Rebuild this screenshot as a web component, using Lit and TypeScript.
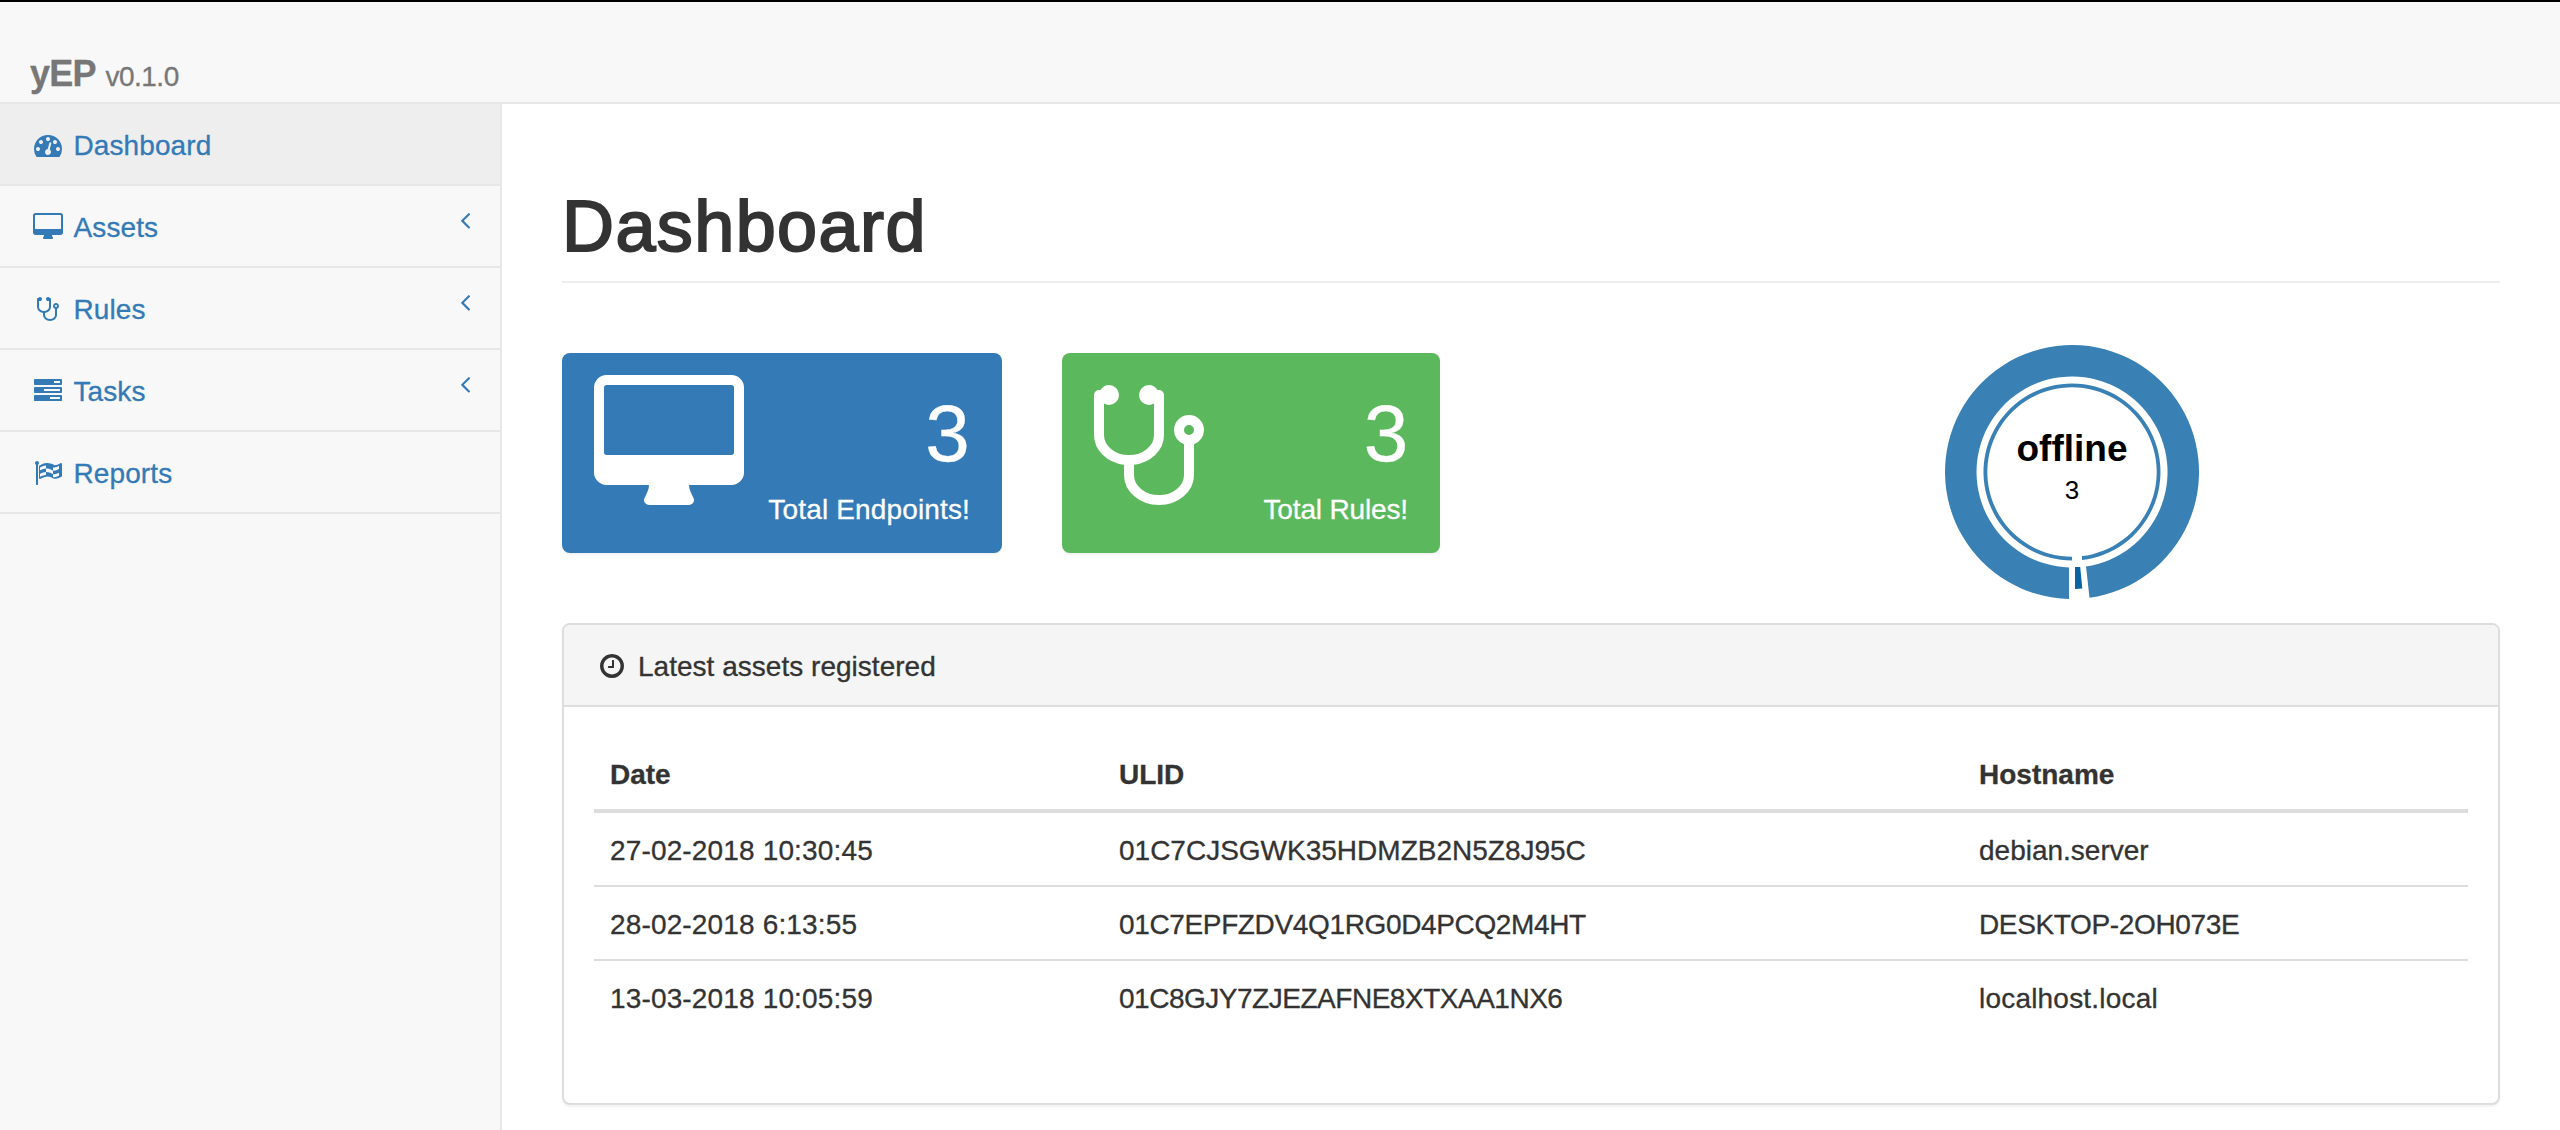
import { LitElement, html, css, svg } from "lit";
import { customElement, property } from "lit/decorators.js";

interface Glyph {
  d: string;
  x: number;
  y: number;
  w: number;
  h: number;
  /** Blank space above the glyph, in glyph units. */
  top: number;
}

const GLYPHS: Record<string, Glyph> = {
  dashboard: {
    d: "M384 1152q0-53-37.5-90.5t-90.5-37.5-90.5 37.5-37.5 90.5 37.5 90.5 90.5 37.5 90.5-37.5 37.5-90.5zm192-448q0-53-37.5-90.5t-90.5-37.5-90.5 37.5-37.5 90.5 37.5 90.5 90.5 37.5 90.5-37.5 37.5-90.5zm428 481l101-382q6-26-7.5-48.5t-38.5-29.5-48 6.5-30 39.5l-101 382q-60 5-107 43.5t-63 98.5q-20 77 20 146t117 89 146-20 89-117q16-60-6-117t-72-91zm660-33q0-53-37.5-90.5t-90.5-37.5-90.5 37.5-37.5 90.5 37.5 90.5 90.5 37.5 90.5-37.5 37.5-90.5zm-640-640q0-53-37.5-90.5t-90.5-37.5-90.5 37.5-37.5 90.5 37.5 90.5 90.5 37.5 90.5-37.5 37.5-90.5zm448 192q0-53-37.5-90.5t-90.5-37.5-90.5 37.5-37.5 90.5 37.5 90.5 90.5 37.5 90.5-37.5 37.5-90.5zm320 448q0 261-141 483-19 29-54 29h-1402q-35 0-54-29-141-221-141-483 0-182 71-348t191-286 286-191 348-71 348 71 286 191 191 286 71 348z",
    x: 0, y: 256, w: 1792, h: 1408, top: 256,
  },
  desktop: {
    d: "M1792 992v-832q0-13-9.5-22.5t-22.5-9.5h-1600q-13 0-22.5 9.5t-9.5 22.5v832q0 13 9.5 22.5t22.5 9.5h1600q13 0 22.5-9.5t9.5-22.5zm128-832v1088q0 66-47 113t-113 47h-544q0 37 16 77.5t32 71 16 43.5q0 26-19 45t-45 19h-512q-26 0-45-19t-19-45q0-14 16-44t32-70 16-78h-544q-66 0-113-47t-47-113v-1088q0-66 47-113t113-47h1600q66 0 113 47t47 113z",
    x: 0, y: 0, w: 1920, h: 1664, top: 0,
  },
  stethoscope: {
    d: "M1344 640q0-26-19-45t-45-19-45 19-19 45 19 45 45 19 45-19 19-45zm128 0q0 62-35.5 111t-92.5 70v395q0 159-131.5 271.5t-316.5 112.5-316.5-112.5-131.5-271.5v-132q-164-20-274-128t-110-252v-512q0-26 19-45t45-19q6 0 16 2 17-30 47-48t65-18q53 0 90.5 37.5t37.5 90.5-37.5 90.5-90.5 37.5q-33 0-64-18v402q0 106 94 181t226 75 226-75 94-181v-402q-31 18-64 18-53 0-90.5-37.5t-37.5-90.5 37.5-90.5 90.5-37.5q35 0 65 18t47 48q10-2 16-2 26 0 45 19t19 45v512q0 144-110 252t-274 128v132q0 106 94 181t226 75 226-75 94-181v-395q-57-21-92.5-70t-35.5-111q0-80 56-136t136-56 136 56 56 136z",
    x: 64, y: 64, w: 1408, h: 1536, top: 128,
  },
  tasks: {
    d: "M1024 1408h640v-128h-640v128zm-384-512h1024v-128h-1024v128zm640-512h384v-128h-384v128zm512 832v256q0 26-19 45t-45 19h-1664q-26 0-45-19t-19-45v-256q0-26 19-45t45-19h1664q26 0 45 19t19 45zm0-512v256q0 26-19 45t-45 19h-1664q-26 0-45-19t-19-45v-256q0-26 19-45t45-19h1664q26 0 45 19t19 45zm0-512v256q0 26-19 45t-45 19h-1664q-26 0-45-19t-19-45v-256q0-26 19-45t45-19h1664q26 0 45 19t19 45z",
    x: 0, y: 128, w: 1792, h: 1408, top: 128,
  },
  flag: {
    d: "M832 896v-192q-181 16-384 117v185q205-96 384-110zm0-416v-197q-172 8-384 126v189q215-111 384-118zm832 463v-184q-235 116-384 71v-224q-20-6-39-15-5-3-33-17t-34.5-17-31.5-15-34.5-15.5-32.5-13-36-12.5-35-8.5-39.5-7.5-39.5-4-44-2q-23 0-49 3v222h19q102 0 192.5 29t197.5 82q19 9 39 15v188q42 17 91 17 120 0 293-92zm0-427v-189q-169 91-306 91-45 0-78-8v196q148 42 384-90zm-1280-388q0 35-17.5 64t-46.5 46v1266q0 14-9 23t-23 9h-64q-14 0-23-9t-9-23v-1266q-29-17-46.5-46t-17.5-64q0-53 37.5-90.5t90.5-37.5 90.5 37.5 37.5 90.5zm1472 64v763q0 39-35 57-10 5-17 9-218 116-369 116-88 0-158-35l-28-14q-64-33-99-48t-91-29-114-14q-102 0-235.5 44t-228.5 102q-15 9-33 9-16 0-32-8-32-19-32-56v-742q0-35 31-55 35-21 78.5-42.5t114-52 152.5-49.5 155-19q112 0 209 31t209 86q38 19 89 19 122 0 310-112 22-12 31-17 31-16 62 2 31 20 31 55z",
    x: 64, y: 0, w: 1792, h: 1536, top: 128,
  },
  clock: {
    d: "M1024 544v448q0 14-9 23t-23 9h-320q-14 0-23-9t-9-23v-64q0-14 9-23t23-9h224v-352q0-14 9-23t23-9h64q14 0 23 9t9 23zm416 352q0-148-73-273t-198-198-273-73-273 73-198 198-73 273 73 273 198 198 273 73 273-73 198-198 73-273zm224 0q0 209-103 385.5t-279.5 279.5-385.5 103-385.5-103-279.5-279.5-103-385.5 103-385.5 279.5-279.5 385.5-103 385.5 103 279.5 279.5 103 385.5z",
    x: 128, y: 128, w: 1536, h: 1536, top: 128,
  },
  angle: {
    d: "M1203 544q0 13-10 23l-393 393 393 393q10 10 10 23t-10 23l-50 50q-10 10-23 10t-23-10l-466-466q-10-10-10-23t10-23l466-466q10-10 23-10t23 10l50 50q10 10 10 23z",
    x: 621, y: 461, w: 582, h: 998, top: 0,
  },
};

/** Draws a glyph at the given em size; 1792 glyph units make one em. */
function icon(name: string, em = 28) {
  const g = GLYPHS[name];
  const k = em / 1792;
  return html`<svg
    width=${g.w * k}
    height=${(g.h + g.top) * k}
    viewBox="${g.x} ${g.y - g.top} ${g.w} ${g.h + g.top}"
    fill="currentColor"
    aria-hidden="true"
  >${svg`<path d=${g.d}></path>`}</svg>`;
}

@customElement("yep-nav")
class YepNav extends LitElement {
  static styles = css`
    :host { display: block; }
    .row {
      box-sizing: border-box;
      height: 82px;
      padding: 0 30px;
      display: flex;
      align-items: flex-start;
      border-bottom: 2px solid #e7e7e7;
      color: #337ab7;
    }
    .row.active { background: #eee; }
    .icon { width: 36px; padding-top: 27px; display: flex; justify-content: center; }
    .label { flex: 1; padding: 22px 0 0 7.5px; line-height: 40px; letter-spacing: 0.1px; }
    .arrow { padding-top: 27px; display: flex; }
  `;

  private items = [
    { label: "Dashboard", glyph: "dashboard", active: true, sub: false },
    { label: "Assets", glyph: "desktop", active: false, sub: true },
    { label: "Rules", glyph: "stethoscope", active: false, sub: true },
    { label: "Tasks", glyph: "tasks", active: false, sub: true },
    { label: "Reports", glyph: "flag", active: false, sub: false },
  ];

  render() {
    return this.items.map(
      (i) => html`<div class="row ${i.active ? "active" : ""}">
        <span class="icon">${icon(i.glyph)}</span>
        <span class="label">${i.label}</span>
        ${i.sub ? html`<span class="arrow">${icon("angle")}</span>` : ""}
      </div>`
    );
  }
}

@customElement("yep-stat")
class YepStat extends LitElement {
  @property() glyph = "";
  @property() value = "";
  @property() label = "";

  static styles = css`
    :host {
      box-sizing: border-box;
      height: 200px;
      padding: 22px 32px 0;
      display: flex;
      justify-content: space-between;
      align-items: flex-start;
      border-radius: 8px;
      color: #fff;
      box-shadow: 0 2px 2px rgba(0, 0, 0, 0.05);
    }
    svg { display: block; }
    .figures { text-align: right; padding-top: 15px; }
    .value { font-size: 80px; line-height: 88px; }
    .label { line-height: 40px; padding-top: 12px; white-space: nowrap; }
  `;

  render() {
    return html`
      ${icon(this.glyph, 140)}
      <div class="figures">
        <div class="value">${this.value}</div>
        <div class="label">${this.label}</div>
      </div>
    `;
  }
}

@customElement("yep-donut")
class YepDonut extends LitElement {
  static styles = css`
    :host { display: block; }
    svg { display: block; }
    .ring { fill: #3980b5; }
    .sliver { fill: #0b62a4; }
    .name { font-size: 37px; font-weight: 700; text-anchor: middle; }
    .count { font-size: 26px; text-anchor: middle; }
  `;

  render() {
    return html`<svg width="256" height="256" viewBox="-128 -128 256 256">
      <path class="ring" d="M-3 126.965A127 127 0 1 1 17.5 125.79L14 94.47A95.5 95.5 0 1 0 -3 95.45Z"></path>
      <path class="ring" d="M0 88.5A88.5 88.5 0 1 1 10 87.93V84.11A84.7 84.7 0 1 0 0 84.7Z"></path>
      <path class="sliver" d="M3 95H8.2L10.3 116.5L3 117Z"></path>
      <text class="name" x="0" y="-11.5">offline</text>
      <text class="count" x="0" y="26.5">3</text>
    </svg>`;
  }
}

interface Cell {
  text: string;
  /** Letter spacing in pixels. */
  track: number;
}

@customElement("yep-assets")
class YepAssets extends LitElement {
  static styles = css`
    :host {
      box-sizing: border-box;
      display: block;
      height: 482px;
      border: 2px solid #ddd;
      border-radius: 8px;
      overflow: hidden;
      background: #fff;
      box-shadow: 0 2px 2px rgba(0, 0, 0, 0.05);
    }
    .heading {
      height: 80px;
      padding: 0 30px;
      display: flex;
      align-items: flex-start;
      background: #f5f5f5;
      border-bottom: 2px solid #ddd;
    }
    .icon { width: 36px; padding-top: 27px; display: flex; justify-content: center; }
    .title { padding: 22px 0 0 8px; line-height: 40px; letter-spacing: 0.02px; }
    .table { padding: 30px; }
    .row { display: grid; grid-template-columns: 509px 860px 1fr; border-top: 2px solid #ddd; }
    .row.head { border-top: 0; border-bottom: 4px solid #ddd; font-weight: 700; }
    .row.first { border-top: 0; }
    .cell { padding: 18px 16px 14px; line-height: 40px; }
  `;

  private rows: Cell[][] = [
    [
      { text: "27-02-2018 10:30:45", track: 0.15 },
      { text: "01C7CJSGWK35HDMZB2N5Z8J95C", track: 0 },
      { text: "debian.server", track: 0 },
    ],
    [
      { text: "28-02-2018 6:13:55", track: 0.15 },
      { text: "01C7EPFZDV4Q1RG0D4PCQ2M4HT", track: -0.36 },
      { text: "DESKTOP-2OH073E", track: -0.35 },
    ],
    [
      { text: "13-03-2018 10:05:59", track: 0.15 },
      { text: "01C8GJY7ZJEZAFNE8XTXAA1NX6", track: -0.48 },
      { text: "localhost.local", track: 0.2 },
    ],
  ];

  render() {
    return html`
      <div class="heading">
        <span class="icon">${icon("clock")}</span>
        <span class="title">Latest assets registered</span>
      </div>
      <div class="table">
        <div class="row head">
          ${["Date", "ULID", "Hostname"].map((c) => html`<div class="cell">${c}</div>`)}
        </div>
        ${this.rows.map(
          (r, n) => html`<div class="row ${n === 0 ? "first" : ""}">
            ${r.map((c) => html`<div class="cell" style="letter-spacing:${c.track}px">${c.text}</div>`)}
          </div>`
        )}
      </div>
    `;
  }
}

@customElement("app-root")
class AppRoot extends LitElement {
  static styles = css`
    :host {
      box-sizing: border-box;
      display: flex;
      flex-direction: column;
      height: 1130px;
      overflow: hidden;
      border-top: 2px solid #000;
      background: #f8f8f8;
      color: #333;
      font-family: "Liberation Sans", Arial, sans-serif;
      font-size: 28px;
      -webkit-text-stroke: 0.3px currentColor;
    }
    .bar {
      box-sizing: border-box;
      height: 102px;
      padding: 52px 30px 0;
      border-bottom: 2px solid #e7e7e7;
      color: #777;
      line-height: 40px;
      white-space: nowrap;
    }
    .brand { font-size: 36px; font-weight: 700; letter-spacing: -0.8px; padding-right: 2px; }
    .version { letter-spacing: -0.5px; }
    .body { flex: 1; display: flex; }
    .side { width: 500px; }
    .main {
      flex: 1;
      border-left: 2px solid #e7e7e7;
      background: #fff;
      padding: 0 60px;
    }
    .title {
      box-sizing: border-box;
      height: 179px;
      margin: 0;
      padding-top: 82px;
      border-bottom: 2px solid #eee;
      font-size: 72px;
      line-height: 80px;
      font-weight: 400;
      letter-spacing: 1.4px;
      -webkit-text-stroke: 2px #333;
    }
    .stats { display: flex; height: 340px; align-items: flex-start; }
    .endpoints { width: 440px; margin: 70px 60px 0 0; background: #337ab7; letter-spacing: 0.15px; }
    .rules { width: 378px; margin-top: 70px; background: #5cb85c; letter-spacing: -0.15px; }
    .chart { flex: 1; padding: 61px 0 0 504px; color: #000; }
  `;

  render() {
    return html`
      <header class="bar"><span class="brand">yEP</span> <span class="version">v0.1.0</span></header>
      <div class="body">
        <nav class="side"><yep-nav></yep-nav></nav>
        <main class="main">
          <h1 class="title">Dashboard</h1>
          <div class="stats">
            <yep-stat class="endpoints" glyph="desktop" value="3" label="Total Endpoints!"></yep-stat>
            <yep-stat class="rules" glyph="stethoscope" value="3" label="Total Rules!"></yep-stat>
            <yep-donut class="chart"></yep-donut>
          </div>
          <yep-assets></yep-assets>
        </main>
      </div>
    `;
  }
}
